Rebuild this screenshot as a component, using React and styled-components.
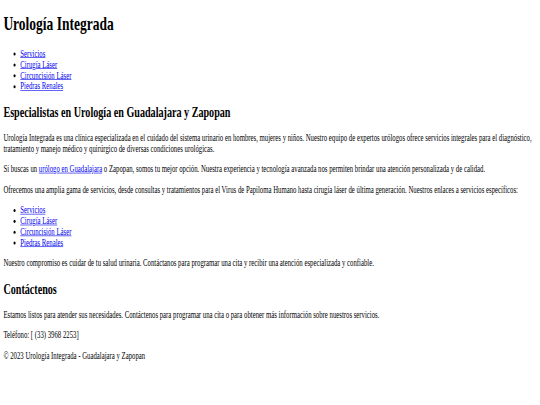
import React from "react";
import styled, { createGlobalStyle } from "styled-components";

const GlobalStyle = createGlobalStyle`
  html, body {
    margin: 0;
    padding: 0;
    background: #fff;
    overflow: hidden;
  }
`;

const services = ["Servicios", "Cirugía Láser", "Circuncisión Láser", "Piedras Renales"];

export default function App() {
  return (
    <Viewport>
      <GlobalStyle />
      <Page>
        <header>
          <Title>Urología Integrada</Title>
          <nav>
            <LinkList>
              {services.map((s) => (
                <li key={s}>
                  <a href="#">{s}</a>
                </li>
              ))}
            </LinkList>
          </nav>
        </header>
        <main>
          <section>
            <Heading>Especialistas en Urología en Guadalajara y Zapopan</Heading>
            <Text>
              Urología Integrada es una clínica especializada en el cuidado del sistema urinario en
              hombres, mujeres y niños. Nuestro equipo de expertos urólogos ofrece servicios integrales
              para el diagnóstico, tratamiento y manejo médico y quirúrgico de diversas condiciones
              urológicas.
            </Text>
            <Text>
              Si buscas un <a href="#">urólogo en Guadalajara</a> o Zapopan, somos tu mejor opción.
              Nuestra experiencia y tecnología avanzada nos permiten brindar una atención personalizada
              y de calidad.
            </Text>
            <Text>
              Ofrecemos una amplia gama de servicios, desde consultas y tratamientos para el Virus de
              Papiloma Humano hasta cirugía láser de última generación. Nuestros enlaces a servicios
              específicos:
            </Text>
            <LinkList>
              {services.map((s) => (
                <li key={s}>
                  <a href="#">{s}</a>
                </li>
              ))}
            </LinkList>
            <Text>
              Nuestro compromiso es cuidar de tu salud urinaria. Contáctanos para programar una cita y
              recibir una atención especializada y confiable.
            </Text>
          </section>
          <section>
            <Heading>Contáctenos</Heading>
            <Text>
              Estamos listos para atender sus necesidades. Contáctenos para programar una cita o para
              obtener más información sobre nuestros servicios.
            </Text>
            <Text>Teléfono: [ (33) 3968 2253]</Text>
          </section>
        </main>
        <footer>
          <Text>© 2023 Urología Integrada - Guadalajara y Zapopan</Text>
        </footer>
      </Page>
    </Viewport>
  );
}

const Viewport = styled.div`
  width: 100vw;
  height: 100vh;
  overflow: hidden;
`;

const Page = styled.div`
  display: flow-root;
  width: 1264px;
  padding: 0 8px 8px;
  transform: scale(0.421875, 0.604);
  transform-origin: top left;
  font-family: "Liberation Serif", "Times New Roman", serif;
  font-size: 16px;
  color: #000;

  a {
    color: #0000ee;
    text-decoration: underline;
  }
`;

const Title = styled.h1`
  font-size: 2em;
  font-weight: bold;
  margin: 0.67em 0;
`;

const Heading = styled.h2`
  font-size: 1.5em;
  font-weight: bold;
  margin: 0.83em 0;
`;

const Text = styled.p`
  margin: 1em 0;
`;

const LinkList = styled.ul`
  list-style: disc;
  margin: 1em 0;
  padding-left: 40px;
`;
